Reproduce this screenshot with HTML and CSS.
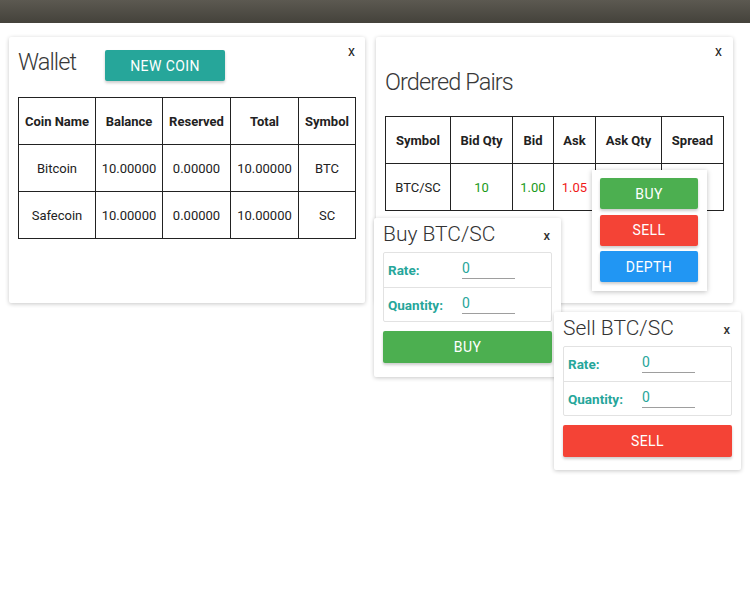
FILE: index.html
```html
<!DOCTYPE html>
<html>
<head>
<meta charset="utf-8">
<link rel="stylesheet" href="styles.css">
</head>
<body>
<div class="topbar"></div>
<div class="desktop">
  <section class="panel wallet">
    <div class="wallet-head">
      <h2 class="title wallet-title">Wallet</h2>
      <button class="btn btn-teal new-coin">NEW COIN</button>
      <span class="close">x</span>
    </div>
    <table class="grid wallet-table">
      <colgroup><col style="width:77px"><col style="width:67px"><col style="width:68px"><col style="width:68px"><col style="width:57px"></colgroup>
      <tr><th>Coin Name</th><th>Balance</th><th>Reserved</th><th>Total</th><th>Symbol</th></tr>
      <tr><td>Bitcoin</td><td>10.00000</td><td>0.00000</td><td>10.00000</td><td>BTC</td></tr>
      <tr><td>Safecoin</td><td>10.00000</td><td>0.00000</td><td>10.00000</td><td>SC</td></tr>
    </table>
  </section>

  <section class="panel pairs">
    <div class="close-row"><span class="close">x</span></div>
    <h2 class="title pairs-title">Ordered Pairs</h2>
    <table class="grid pairs-table">
      <colgroup><col style="width:65px"><col style="width:62px"><col style="width:41px"><col style="width:42px"><col style="width:66px"><col style="width:62px"></colgroup>
      <tr><th>Symbol</th><th>Bid Qty</th><th>Bid</th><th>Ask</th><th>Ask Qty</th><th>Spread</th></tr>
      <tr><td>BTC/SC</td><td class="green">10</td><td class="green">1.00</td><td class="red">1.05</td><td></td><td></td></tr>
    </table>
  </section>

  <div class="menu">
    <button class="btn btn-green">BUY</button>
    <button class="btn btn-red">SELL</button>
    <button class="btn btn-blue">DEPTH</button>
  </div>

  <section class="panel trade buy-win">
    <div class="trade-head">
      <h3 class="trade-title">Buy BTC/SC</h3>
      <span class="close small">x</span>
    </div>
    <div class="form">
      <div class="form-row"><span class="label">Rate:</span><span class="input">0</span></div>
      <div class="form-row"><span class="label">Quantity:</span><span class="input">0</span></div>
    </div>
    <button class="btn btn-green wide">BUY</button>
  </section>

  <section class="panel trade sell-win">
    <div class="trade-head">
      <h3 class="trade-title">Sell BTC/SC</h3>
      <span class="close small">x</span>
    </div>
    <div class="form">
      <div class="form-row"><span class="label">Rate:</span><span class="input">0</span></div>
      <div class="form-row"><span class="label">Quantity:</span><span class="input">0</span></div>
    </div>
    <button class="btn btn-red wide">SELL</button>
  </section>
</div>
</body>
</html>
```

FILE: styles.css
```css
* { box-sizing: border-box; }
html, body { margin: 0; padding: 0; background: #fff; }
body { font-family: Roboto, "Liberation Sans", sans-serif; color: #222; width: 750px; height: 600px; overflow: hidden; }

.topbar { height: 23px; background: linear-gradient(#5c5951, #44423b); }

.desktop { position: relative; display: flex; gap: 11px; padding: 14px 9px 0 9px; height: 577px; }

.panel { background: #fff; border-radius: 2px; box-shadow: 0 1px 4px rgba(0,0,0,0.22); }

.wallet { width: 356px; height: 266px; padding: 6px 9px 0 9px; }
.pairs { width: 357px; height: 266px; padding: 6px 10px 0 9px; }

.wallet-head { display: flex; align-items: flex-start; }
.title { margin: 0; font-weight: 300; font-size: 23.5px; line-height: 28px; color: #383838; letter-spacing: -0.9px; }
.wallet-title { width: 87px; margin-top: 5px; }
.close { font-size: 14px; line-height: 16px; color: #222; margin-left: auto; margin-right: 1px; }
.close-row { display: flex; }
.pairs-title { margin-top: 9px; }

.btn { border: 0; border-radius: 2px; color: #fff; font-family: Roboto, "Liberation Sans", sans-serif; font-size: 14px; letter-spacing: 0.4px; height: 31px; padding: 0; box-shadow: 0 2px 3px rgba(0,0,0,0.2); display: flex; align-items: center; justify-content: center; }
.btn-teal { background: #26a69a; }
.btn-green { background: #4caf50; }
.btn-red { background: #f44336; }
.btn-blue { background: #2196f3; }
.new-coin { width: 120px; margin-top: 7px; }

.grid { border-collapse: collapse; table-layout: fixed; font-size: 13px; }
.grid th, .grid td { border: 1px solid #222; text-align: center; padding: 0; height: 47px; }
.grid th { font-weight: 700; }
.wallet-table { width: 337px; margin-top: 16px; }
.pairs-table { width: 338px; margin-top: 20px; }
.green { color: #1a9a1a; }
.red { color: #f01818; }

.menu { position: absolute; left: 592px; top: 147px; width: 115px; height: 121px; background: #fff; box-shadow: 0 1px 5px rgba(0,0,0,0.25); padding: 8px; display: flex; flex-direction: column; gap: 5.5px; }
.menu .btn { width: 98px; }

.trade { position: absolute; width: 187px; padding: 3px 9px 0 9px; }
.buy-win { left: 374px; top: 195px; height: 159px; }
.sell-win { left: 554px; top: 289px; height: 158px; }
.trade-head { display: flex; align-items: center; height: 26px; }
.trade-title { margin: 0; font-size: 21px; font-weight: 300; line-height: 26px; color: #333; }
.close.small { font-size: 13px; font-weight: 500; margin-right: 2px; color: #333; margin-top: 4px; }

.form { margin-top: 5px; border: 1px solid #e2e2e2; border-radius: 2px; }
.form-row { display: flex; align-items: flex-start; height: 34px; padding-left: 4px; }
.form-row + .form-row { border-top: 1px solid #e2e2e2; height: 34px; }
.label { color: #26a69a; font-weight: 700; font-size: 13.5px; width: 74px; margin-top: 9px; }
.input { color: #26a69a; font-size: 14px; width: 53px; height: 26px; padding-top: 7px; border-bottom: 1px solid #9e9e9e; }
.wide { width: 100%; margin-top: 9px; height: 32px; }
```
